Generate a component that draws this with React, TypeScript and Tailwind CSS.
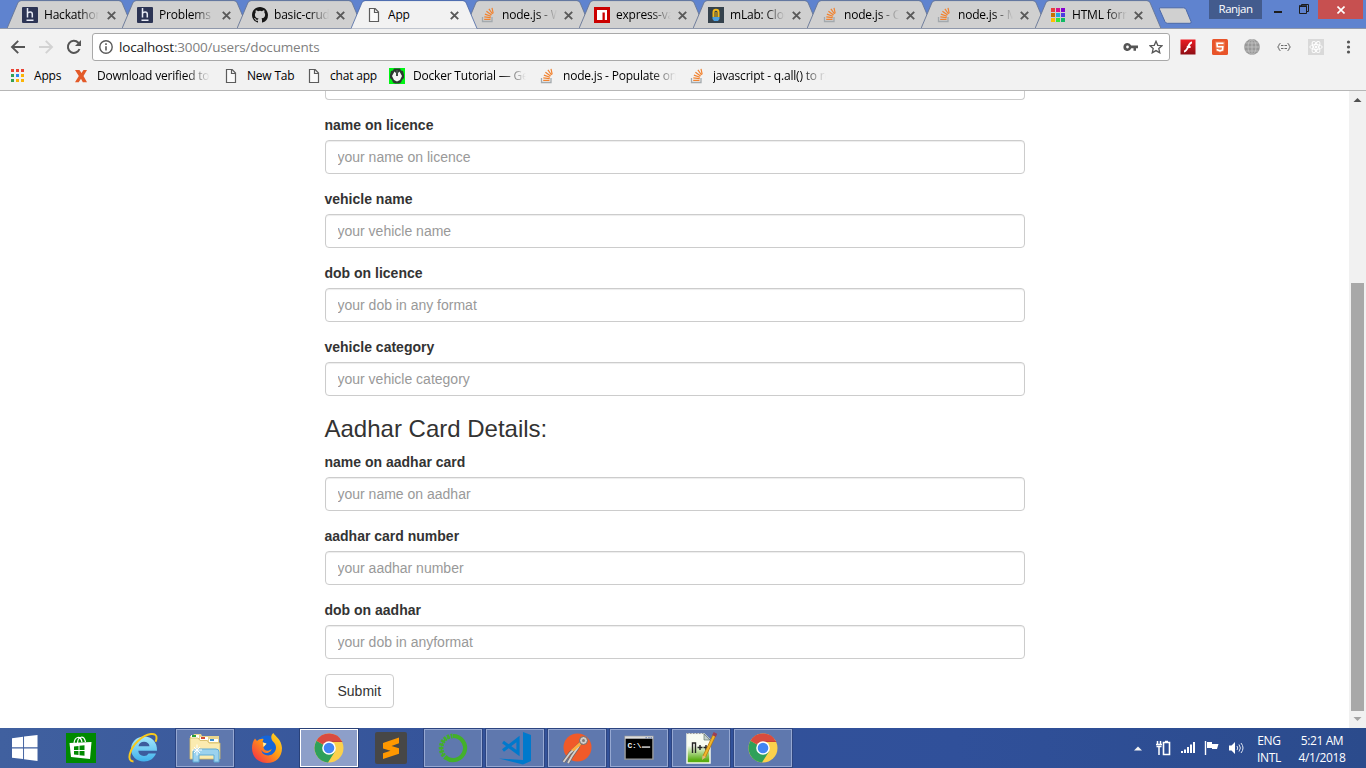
import React from "react";

const UI = "font-['Open_Sans','Noto_Sans',sans-serif]";

function HackerEarth() {
  return (
    <svg width="16" height="16" viewBox="0 0 16 16">
      <rect width="16" height="16" rx="1" fill="#2c3454" />
      <path d="M5.5 1v9.500M5.500 6.500C6.300 4.700 10.300 4.300 10.300 7.200v3.300M4.500 13.200h7" fill="none" stroke="#e8ebf5" strokeWidth="1.500" />
    </svg>
  );
}

function GitHub() {
  return (
    <svg width="16" height="16" viewBox="0 0 16 16">
      <path fill="#161616" d="M8 0C3.58 0 0 3.58 0 8c0 3.54 2.29 6.53 5.47 7.59.4.07.55-.17.55-.38 0-.19-.01-.82-.01-1.49-2.01.37-2.53-.49-2.69-.94-.09-.23-.48-.94-.82-1.13-.28-.15-.68-.52-.01-.53.63-.01 1.08.58 1.23.82.72 1.21 1.87.87 2.33.66.07-.52.28-.87.51-1.07-1.78-.2-3.64-.89-3.64-3.95 0-.87.31-1.59.82-2.15-.08-.2-.36-1.02.08-2.12 0 0 .67-.21 2.2.82a7.6 7.6 0 0 1 4 0c1.53-1.04 2.2-.82 2.2-.82.44 1.1.16 1.92.08 2.12.51.56.82 1.27.82 2.15 0 3.07-1.87 3.75-3.65 3.95.29.25.54.73.54 1.48 0 1.07-.01 1.93-.01 2.2 0 .21.15.46.55.38A8.01 8.01 0 0 0 16 8c0-4.42-3.58-8-8-8z" />
    </svg>
  );
}

function Doc() {
  return (
    <svg width="16" height="16" viewBox="0 0 16 16">
      <path d="M3.500 1.500h5.700l3.300 3.500v9.500h-9zM8.500 1.500v4h4" fill="#fafafa" stroke="#5c5c5c" strokeWidth="1.200" />
    </svg>
  );
}

function Stack() {
  return (
    <svg width="16" height="16" viewBox="0 0 16 16" fill="none">
      <path d="M2.500 10v4.500h9.500V10" stroke="#a3a9ad" strokeWidth="1.300" />
      <path d="M4.200 12.400h6.300M4.300 9.800l6.400.9M4.900 7.100l6.100 2.200M6.400 4.200l5.200 3.900M8.900 1.800l3.600 5.200M12 .8l1.200 5.500" stroke="#f1822f" strokeWidth="1.200" />
    </svg>
  );
}

function Npm() {
  return (
    <svg width="16" height="16" viewBox="0 0 16 16">
      <path fill="#cb0000" d="M0 0h16v16H0z" />
      <path fill="#fff" d="M3 3h10v10h-2.200V5.500H8.500V13H3z" />
    </svg>
  );
}

function MLab() {
  return (
    <svg width="16" height="16" viewBox="0 0 16 16">
      <path fill="#35424c" d="M0 0h16v16H0z" />
      <path d="M5.500 10V5.200Q5.500 2.800 8 2.800t2.500 2.400V10" fill="none" stroke="#f4b91b" strokeWidth="2" />
      <path d="M8 5v5" stroke="#f4b91b" />
      <path fill="#4c9fe0" d="M4.500 10h7v2L10 13.900H6L4.500 12z" />
    </svg>
  );
}

function ColorGrid() {
  const c = ["#ea3d3d", "#d6148c", "#8500cf", "#c77200", "#22a7e0", "#4e3ce0", "#ffbf00", "#37e537", "#10b964"];
  return (
    <svg width="16" height="16" viewBox="0 0 16 16">
      {c.map((f, i) => (
        <rect key={i} x={1 + (i % 3) * 5} y={1 + Math.floor(i / 3) * 5} width="4" height="4" fill={f} />
      ))}
    </svg>
  );
}

function Cross() {
  return (
    <svg width="9" height="9" viewBox="0 0 9 9">
      <path d="M.8.8l7.400 7.400M8.200.8L.8 8.200" stroke="#595959" strokeWidth="1.900" />
    </svg>
  );
}

type TabData = { title: string; icon: React.ReactNode; active?: boolean; wide?: boolean };

const tabs: TabData[] = [
  { title: "Hackathons", icon: <HackerEarth />, wide: true },
  { title: "Problems - J", icon: <HackerEarth />, wide: true },
  { title: "basic-crud-", icon: <GitHub /> },
  { title: "App", icon: <Doc />, active: true },
  { title: "node.js - W", icon: <Stack /> },
  { title: "express-vali", icon: <Npm /> },
  { title: "mLab: Clou", icon: <MLab /> },
  { title: "node.js - Ca", icon: <Stack /> },
  { title: "node.js - Mo", icon: <Stack /> },
  { title: "HTML forms", icon: <ColorGrid /> },
];

function Tab({ title, icon, active, wide }: TabData) {
  return (
    <div className={`relative h-[29px] shrink-0 ${wide ? "w-[115px]" : "w-[114px]"} ${active ? "z-10" : ""}`}>
      <svg className="absolute left-0 top-0" width="128" height="29" viewBox="0 0 128 29">
        <path d="M0 28.500L10.800 3Q11.600 1 14 1H112Q114.400 1 115.200 3L126 28.500" fill={active ? "#f2f2f2" : "#d0d0d0"} />
        <path d="M0 28.500L10.800 3Q11.600 .6 14 .6H112Q114.400 .6 115.200 3L126 28.500" fill="none" stroke={active ? "#4a66a4" : "#667596"} strokeOpacity={active ? 0.8 : 0.9} />
        {!active && <path d="M0 28.500H126" stroke="#a2a2a2" />}
      </svg>
      <div className="relative flex h-[29px] items-center pl-[15px] pt-px">
        {icon}
        <span className={`ml-[6px] w-[55px] overflow-hidden whitespace-nowrap text-[12px] leading-[18px] tracking-[-0.2px] text-black ${active ? "" : "[mask-image:linear-gradient(to_right,#000_64%,transparent)]"}`}>
          {title}
        </span>
        <span className={wide ? "ml-[8px]" : "ml-[7px]"}><Cross /></span>
      </div>
    </div>
  );
}

function TabStrip() {
  return (
    <div className="flex h-[28px] items-start bg-[#5f83cf]">
      <div className="flex h-[29px] w-[1149px] shrink-0 pl-[7px]">
        {tabs.map((t, i) => <Tab key={i} {...t} />)}
      </div>
      <svg className="ml-[9px] mt-[7px] shrink-0" width="35" height="18" viewBox="0 0 35 18">
        <path d="M2.500 .8H25.500Q27.300 .8 28 2.400L33 14.500Q33.600 16.300 32 16.300H9.500Q7.800 16.300 7 14.700L1.600 2.500Q1 .8 2.500 .8z" fill="#d0d0d0" stroke="#4c69a8" />
      </svg>
      <div className="ml-[16px] h-[19px] w-[53px] shrink-0 bg-[#435b8d] text-center text-[11.500px] leading-[18px] tracking-[-0.500px] text-white">Ranjan</div>
      <svg className="shrink-0" width="56" height="19" viewBox="0 0 56 19" fill="none" stroke="#1d1d1d">
        <path d="M12 12h8" strokeWidth="2" />
        <path d="M37.500 6.500h7v7h-7zM39.500 6V4.500h7v7H45" />
        <path d="M37 6h8" strokeWidth="1.500" />
      </svg>
      <div className="flex h-[19px] w-[45px] shrink-0 items-center justify-center bg-[#c75050]">
        <svg width="8" height="8" viewBox="0 0 8 8"><path d="M.5.5l7 7M7.500.5l-7 7" stroke="#fff" strokeWidth="1.600" /></svg>
      </div>
    </div>
  );
}

function Toolbar() {
  return (
    <div className="relative flex h-[33px] items-end border-t border-[#8f98ab] bg-[#f2f2f2]">
      <div className="flex h-[28px] w-[92px] shrink-0 items-center pl-[10px]">
        <svg width="16" height="16" viewBox="0 0 16 16" fill="none" stroke="#555" strokeWidth="1.900"><path d="M15 8H2.500M8.200 1.800L2 8l6.200 6.200" /></svg>
        <svg className="ml-[12px]" width="16" height="16" viewBox="0 0 16 16" fill="none" stroke="#d2d2d2" strokeWidth="1.900"><path d="M1 8h12.500M7.800 1.800L14 8l-6.200 6.200" /></svg>
        <svg className="ml-[12px]" width="16" height="16" viewBox="0 0 16 16" fill="none"><path d="M13.500 10A6 6 0 1 1 12.300 3.800L14 5.500" stroke="#555" strokeWidth="2" /><path d="M15 1v6H9z" fill="#555" /></svg>
      </div>
      <div className="flex h-[28px] w-[1078px] shrink-0 items-center rounded-[3px] border border-[#a9a9a9] bg-white pl-[6px] pr-[6px]">
        <svg width="14" height="14" viewBox="0 0 14 14" fill="none" stroke="#5a5a5a"><circle cx="7" cy="7" r="6.200" strokeWidth="1.400" /><path d="M7 6.200v4.300M7 3.300v1.600" strokeWidth="1.600" /></svg>
        <span className="ml-[6px] text-[13.500px] leading-[20px] tracking-[-0.18px] text-[#808080]"><span className="text-[#222]">localhost</span>:3000/users/documents</span>
        <div className="ml-auto flex items-center gap-[11px]">
          <svg width="15" height="10" viewBox="0 0 15 10"><path fillRule="evenodd" fill="#555" d="M4.500 1a4 4 0 1 0 3.700 5.300h2.300v2.400h2.500V6.300H15V3.500H8.200A4 4 0 0 0 4.500 1zm0 2.600a1.400 1.400 0 1 1 0 2.800 1.400 1.400 0 0 1 0-2.800z" /></svg>
          <svg width="14" height="14" viewBox="0 0 14 14"><path d="M7 1.300l1.750 4 4.300.4-3.250 2.900.95 4.200L7 10.600l-3.750 2.200.95-4.200L.95 5.700l4.300-.4z" fill="none" stroke="#555" strokeWidth="1.300" /></svg>
        </div>
      </div>
      <div className="flex h-[28px] items-center gap-[16px] pl-[10px]">
        <svg width="16" height="16" viewBox="0 0 16 16"><defs><linearGradient id="flash" x1="0" y1="0" x2="0" y2="1"><stop stopColor="#ed1c24" /><stop offset="1" stopColor="#8d0e14" /></linearGradient></defs><path fill="url(#flash)" d="M.5.5h15v15H.5z" /><path d="M12 3.500C8 3.500 8.200 12.300 4 12.500M6.800 8h3.800" fill="none" stroke="#fff" strokeWidth="1.900" /></svg>
        <svg width="16" height="16" viewBox="0 0 16 16"><rect width="16" height="16" rx="1.500" fill="#e8542a" /><path d="M3 2.500h10l-1 9.700-4 1.300-4-1.300z" fill="#ef7a50" /><path d="M11.500 4.200H5l.3 3.600h5.500l-.3 3.200-2.500.8-2.500-.8-.1-1" fill="none" stroke="#fff" strokeWidth="1.600" /></svg>
        <svg width="16" height="16" viewBox="0 0 16 16" fill="none" stroke="#c4c4c4" strokeWidth=".8"><circle cx="8" cy="8" r="7.900" fill="#989898" stroke="none" /><path d="M0 8h16M8 0v16M1.500 4h13M1.500 12h13" /><ellipse cx="8" cy="8" rx="4" ry="7.600" /></svg>
        <svg width="16" height="16" viewBox="0 0 16 16" fill="none" stroke="#6c6c6c"><path d="M4.500 4.500q-1.500 0-1.500 1.500T1.500 8q1.500.4 1.500 2t1.500 1.500M11.500 4.500q1.500 0 1.500 1.500t1.500 2q-1.500.4-1.500 2t-1.500 1.500" /><path d="M5 6.500h2.500M8.500 6.500H11M5 9.500h2.500M8.500 9.500H11" /></svg>
        <svg width="16" height="16" viewBox="0 0 16 16" fill="none" stroke="#fff" strokeWidth=".9"><path fill="#d9d9d9" stroke="none" d="M0 0h16v16H0z" /><circle cx="8" cy="8" r="1" fill="#fff" /><ellipse cx="8" cy="8" rx="6.200" ry="2.500" /><ellipse cx="8" cy="8" rx="6.200" ry="2.500" transform="rotate(60 8 8)" /><ellipse cx="8" cy="8" rx="6.200" ry="2.500" transform="rotate(120 8 8)" /></svg>
        <svg width="16" height="16" viewBox="0 0 16 16" fill="#555"><circle cx="8.500" cy="3" r="1.600" /><circle cx="8.500" cy="8" r="1.600" /><circle cx="8.500" cy="13" r="1.600" /></svg>
      </div>
    </div>
  );
}

function AppsIcon() {
  const c = ["#ea4335", "#ea4335", "#ea4335", "#34a053", "#2b87f0", "#fbb405", "#34a053", "#fbb405", "#fbb405"];
  return (
    <svg width="13" height="13" viewBox="0 0 13 13">
      {c.map((f, i) => <rect key={i} x={(i % 3) * 5} y={Math.floor(i / 3) * 5} width="3" height="3" fill={f} />)}
    </svg>
  );
}

function Bookmark({ icon, width, children, fade }: { icon: React.ReactNode; width: string; children: React.ReactNode; fade?: boolean }) {
  return (
    <div className={`flex shrink-0 items-center ${width}`}>
      {icon}
      <span className={`ml-[8px] flex-1 overflow-hidden whitespace-nowrap text-[12px] leading-[18px] tracking-[-0.2px] text-black ${fade ? "mr-[13px] [mask-image:linear-gradient(to_right,#000_78%,transparent)]" : ""}`}>{children}</span>
    </div>
  );
}

function Bookmarks() {
  return (
    <div className="flex h-[30px] items-center border-b border-[#b6b6b6] bg-[#f2f2f2] pl-[11px]">
      <Bookmark icon={<span className="mr-[2px]"><AppsIcon /></span>} width="w-[62px]">Apps</Bookmark>
      <Bookmark fade width="w-[150px]" icon={<svg width="16" height="16" viewBox="0 0 16 16"><path fill="#e35a29" d="M2 2h4.500l2 3L10.500 2h3.500l-3.500 6 3.500 6.200H9.800L8 10.800l-2.300 3.400H2l3.800-6.200z" /></svg>}>Download verified torrents</Bookmark>
      <Bookmark width="w-[83px]" icon={<Doc />}>New Tab</Bookmark>
      <Bookmark width="w-[83px]" icon={<Doc />}>chat app</Bookmark>
      <Bookmark fade width="w-[150px]" icon={<svg width="16" height="16" viewBox="0 0 16 16"><path fill="#00f414" d="M0 0h16v16H0z" /><path fill="#2c3830" d="M5 .5h6l1 2 2 .5 1 4v3l-2 2-1 2.500-2 1H6l-2-1-1-2.500-2-2V7l1-4 2-.5z" /><path d="M5.500 3.500L7 5v3h2V5l1.500-1.500L13 8l-2 4-3 1.500L5 12 3 8z" fill="#f5f5f5" /><path d="M8 2v6" stroke="#59615c" strokeWidth="1" /></svg>}>Docker Tutorial — Getting</Bookmark>
      <Bookmark fade width="w-[150px]" icon={<Stack />}>node.js - Populate on s</Bookmark>
      <Bookmark fade width="w-[150px]" icon={<Stack />}>javascript - q.all() to re</Bookmark>
    </div>
  );
}

function Field({ label, placeholder }: { label: string; placeholder: string }) {
  return (
    <div className="mb-[15px]">
      <label className="mb-[5px] block text-[14px] font-bold leading-[20px] text-[#333]">{label}</label>
      <input className="block h-[34px] w-full rounded-[4px] border border-[#ccc] bg-white px-3 py-1.5 text-[14px] leading-[20px] shadow-[inset_0_1px_1px_rgba(0,0,0,0.075)] placeholder:text-[#999] placeholder:opacity-100" placeholder={placeholder} />
    </div>
  );
}

function Page() {
  return (
    <div className="flex h-[637px] bg-white">
      <main className="flex-1 overflow-hidden font-['Liberation_Sans',Arial,sans-serif]">
        <form className="mx-auto w-[700px]" onSubmit={(e) => e.preventDefault()}>
          <div className="mb-[15px] h-[9px] rounded-b-[4px] border border-t-0 border-[#ccc]" />
          <Field label="name on licence" placeholder="your name on licence" />
          <Field label="vehicle name" placeholder="your vehicle name" />
          <Field label="dob on licence" placeholder="your dob in any format" />
          <Field label="vehicle category" placeholder="your vehicle category" />
          <h3 className="mb-[10px] mt-[20px] text-[24px] font-normal leading-[26.4px] text-[#333]">Aadhar Card Details:</h3>
          <Field label="name on aadhar card" placeholder="your name on aadhar" />
          <Field label="aadhar card number" placeholder="your aadhar number" />
          <Field label="dob on aadhar" placeholder="your dob in anyformat" />
          <button className="block h-[34px] rounded-[4px] border border-[#ccc] bg-white px-3 text-[14px] leading-[20px] text-[#333]">Submit</button>
        </form>
      </main>
      <div className="flex w-[17px] shrink-0 flex-col items-center bg-[#f1f1f1]">
        <svg width="17" height="17" viewBox="0 0 17 17"><path d="M4.500 11L8.500 7l4 4z" fill="#505050" /></svg>
        <div className="mt-[175px] h-[428px] w-[13px] bg-[#a8a8a8]" />
        <svg width="17" height="17" viewBox="0 0 17 17"><path d="M4.500 6l4 4 4-4z" fill="#a3a3a3" /></svg>
      </div>
    </div>
  );
}

function Chrome() {
  return (
    <svg width="30" height="30" viewBox="0 0 30 30">
      <circle cx="15" cy="15" r="14.500" fill="#fbd14c" />
      <path d="M15 15L2.500 7.700A14.500 14.500 0 0 0 14 29.500L21.300 18z" fill="#2fa05a" />
      <path d="M15 15L2.500 7.700A14.500 14.500 0 0 1 28.300 9H15z" fill="#d94b3f" />
      <path d="M15 8.500h13.300" stroke="#b23b32" strokeWidth=".5" />
      <circle cx="15" cy="15" r="6.800" fill="#fff" />
      <circle cx="15" cy="15" r="5.300" fill="#4285f4" />
    </svg>
  );
}

function Store() {
  return (
    <svg width="30" height="30" viewBox="0 0 30 30">
      <path fill="#008a00" d="M0 0h30v30H0z" />
      <path d="M8 10.500C8.500 3.500 14.500 2 16 9M11.500 10C12 3 18 2 19.500 9" fill="none" stroke="#fff" strokeWidth="1.200" />
      <path d="M3.500 10L25.500 9 24 26 5 24z" fill="#fff" />
      <path d="M8 13.500l4.500-.5v4H8zM13.500 12.800l5-.6v4.800h-5zM8 18h4.500v4L8 21.500zM13.500 18h5v4.800l-5-.6z" fill="#008a00" />
    </svg>
  );
}

function IE() {
  return (
    <svg width="32" height="32" viewBox="0 0 32 32" fill="none">
      <defs><linearGradient id="ie" x1="0" y1="0" x2="0" y2="1"><stop stopColor="#a6e8fc" /><stop offset="1" stopColor="#3fb2ec" /></linearGradient></defs>
      <path fill="url(#ie)" fillRule="evenodd" d="M17 4.500C10 4.500 4 9.800 4 17s5.500 12.500 13 12.500c5.500 0 10-3 12-8h-7.500c-1 1.700-2.500 2.500-4.500 2.500-3.500 0-5.500-2-5.700-5.200H30C30.500 10.500 25 4.500 17 4.500zm-5.500 9.800C12 11.300 14 9.700 17 9.700s5.200 1.600 5.500 4.600z" />
      <path d="M6.500 29.500C-1 29.500 2.500 17 11 9 19.500.8 30.500-.5 29.500 6.500c-.1 1.200-.5 2.300-1 3.300" stroke="#f8c91c" strokeWidth="2" />
    </svg>
  );
}

function Explorer() {
  return (
    <svg width="34" height="32" viewBox="0 0 34 32">
      <path d="M2 4h3l1-2h7l1 2h17v23H2z" fill="#e8d58e" />
      <path d="M3 3h8v3H3z" fill="#fff" /><path d="M4 3h4v2H4z" fill="#2aa037" /><path d="M12 5h8v3h-8z" fill="#fff" /><path d="M13 5h4v2h-4z" fill="#d24a34" /><path d="M21 7h9v3h-9z" fill="#fff" /><path d="M22 7h4v2h-4z" fill="#3b8ed0" />
      <path d="M2 6h8l2 2.500h7l2 2.500h11v16H2z" fill="#fbebb0" stroke="#d6bd68" strokeWidth=".8" />
      <path d="M5 30V20q0-3 3-3h20q3 0 3 3v10h-5v-7H11v7z" fill="#9bd2ee" stroke="#5fabd6" />
      <path d="M9 12.500v11M4 18h10M6 15l6 6M12 15l-6 6" stroke="#fff" strokeWidth="1" />
    </svg>
  );
}

function Firefox() {
  return (
    <svg width="32" height="32" viewBox="0 0 32 32">
      <defs><linearGradient id="ff" x1="1" y1="0" x2="0" y2="1"><stop stopColor="#ffe226" /><stop offset=".45" stopColor="#ff9a14" /><stop offset="1" stopColor="#f31f50" /></linearGradient></defs>
      <circle cx="16" cy="15" r="11.500" fill="#1665d8" />
      <path d="M4 6.500L6 9c2-2 5-2.500 6.500-2l-1 3 4 2-3 3c0 4 5 5 8 2 0 4-8 6-10 1 0 5 7 7 11 4 5-4 4-9 1-12-3-3-3-7 0-9 1 3 8 6 8.500 15C31 25 25 31 16 31 7 31 1 25 1 16c0-4 1-7 3-9.500z" fill="url(#ff)" />
      <path d="M12.500 15l3-3.500-3.500-1z" fill="#fff2a8" />
    </svg>
  );
}

function Sublime() {
  return (
    <svg width="32" height="32" viewBox="0 0 32 32">
      <rect width="32" height="32" rx="2" fill="#474747" />
      <path d="M8 11L24 5.500v5.700L16.500 14l7.500 2.300v5.400L8 27v-5.700l7.500-2.600L8 16.500z" fill="#ff9800" />
    </svg>
  );
}

function Anaconda() {
  return (
    <svg width="32" height="32" viewBox="0 0 32 32" fill="none" stroke="#43b02a">
      <path d="M16 4A12 12 0 1 1 9 25.700" strokeWidth="4.200" />
      <path d="M9.500 26A12 12 0 0 1 15.500 4" strokeWidth="4.800" strokeDasharray="2.200 1.300" />
      <path d="M7 24A12 12 0 0 1 13 5" strokeWidth="1.400" strokeDasharray="4 1" />
    </svg>
  );
}

function VSCode() {
  return (
    <svg width="34" height="34" viewBox="0 0 34 34">
      <path d="M25 1l8 3v26l-8 3.500L1 27.500l24 1.500z" fill="#0079cc" />
      <path d="M5 11L20 22V8L5 19.500" fill="none" stroke="#0079cc" strokeWidth="3.200" />
    </svg>
  );
}

function Postman() {
  return (
    <svg width="32" height="32" viewBox="0 0 32 32">
      <circle cx="16.500" cy="15.500" r="14" fill="#f15a29" />
      <path d="M22 9L9 21 2.500 30M18 14l-7 10-4 7" stroke="#6f6864" strokeWidth="3.200" fill="none" />
      <path d="M22 9L9 21 2.500 30M18 14l-7 10-4 7" stroke="#d5d1ce" strokeWidth="1.800" fill="none" />
      <path d="M19 10l-9 8 3 1 7-6z" fill="#ffaf3d" />
      <circle cx="22.500" cy="8.500" r="4" fill="#d0ccc8" stroke="#726963" /><circle cx="22.500" cy="8.500" r="1.500" fill="#817a76" />
    </svg>
  );
}

function Terminal() {
  return (
    <svg width="30" height="26" viewBox="0 0 32 28">
      <path d="M1 1.500h30V26H1z" fill="#000" stroke="#9c9c9c" strokeWidth="1.500" />
      <path d="M1 1.500h30V4H1z" fill="#dedede" /><path d="M23 3h1.500M26 3h1.500M28.500 3H30" stroke="#4866a2" />
      <text x="3.500" y="13.500" fill="#f4f4f4" fontSize="8.500" fontWeight="bold" fontFamily="Liberation Mono">C:\</text>
      <path d="M19 13h9" stroke="#f4f4f4" strokeWidth="1.400" />
    </svg>
  );
}

function Notepad() {
  return (
    <svg width="32" height="34" viewBox="0 0 32 34">
      <defs><linearGradient id="np" x1="0" y1="0" x2="0" y2="1"><stop offset=".4" stopColor="#f8fcf2" /><stop offset=".9" stopColor="#59ad12" /></linearGradient></defs>
      <path d="M2 3h17l6 6v23H2z" fill="url(#np)" stroke="#f3f7ec" strokeWidth="1.500" />
      <path d="M2 2.500h17" stroke="#999" strokeDasharray="1.500 1.500" /><path d="M19 3v6h6z" fill="#c4d0cd" stroke="#4f6155" strokeWidth=".6" />
      <path d="M7.500 22V12h3v10M12.500 16.500h5M15 14v5M18.500 16.500h5M21 14v5" fill="none" stroke="#252525" strokeWidth="1.400" />
      <path d="M29.500 4L19 26" stroke="#b67813" strokeWidth="3.500" /><path d="M29.500 4L19 26" stroke="#f0b72c" strokeWidth="2" /><path d="M30.500 2L29 5" stroke="#9d3f52" strokeWidth="4" /><path d="M17.500 24.500L17 29l4-3z" fill="#e6ba77" />
    </svg>
  );
}

function Task({ children, state }: { children: React.ReactNode; state?: "open" | "focus" }) {
  const box =
    state === "focus"
      ? "border-white bg-[#8d9fc9] outline outline-1 outline-[#294178]"
      : state === "open"
        ? "border-[#96a8d2] bg-[#5f78ae] outline outline-1 outline-[#2d4581]"
        : "border-transparent";
  return (
    <div className="flex h-[40px] w-[62px] shrink-0 items-center justify-center">
      <div className={`flex h-[38px] w-[58px] items-center justify-center border ${box}`}>{children}</div>
    </div>
  );
}

function Taskbar() {
  return (
    <div className="flex h-[40px] items-center bg-[linear-gradient(90deg,#40609f,#34539a_35%,#30509a_70%,#2b4b8c)] text-white">
      <div className="flex h-[40px] w-[50px] shrink-0 items-center pl-[12px]">
        <svg width="26" height="26" viewBox="0 0 27 27"><path fill="#fff" d="M0 3.500l11.500-1.700v11H0zM12.500 1.600L26.500 0v12.800h-14zM0 14h11.500v11L0 23.500zM12.500 14h14v13l-14-1.900z" /></svg>
      </div>
      <Task><Store /></Task>
      <Task><IE /></Task>
      <Task state="open"><Explorer /></Task>
      <Task><Firefox /></Task>
      <Task state="focus"><Chrome /></Task>
      <Task><Sublime /></Task>
      <Task state="open"><Anaconda /></Task>
      <Task state="open"><VSCode /></Task>
      <Task state="open"><Postman /></Task>
      <Task state="open"><Terminal /></Task>
      <Task state="open"><Notepad /></Task>
      <Task state="open"><Chrome /></Task>
      <div className="ml-auto flex items-center">
        <svg width="8" height="5" viewBox="0 0 8 5"><path d="M0 4.500L4 .5l4 4z" fill="#f4f4f4" /></svg>
        <svg className="ml-[14px]" width="16" height="18" viewBox="0 0 16 18" fill="none" stroke="#fff"><path d="M7.500 3.500h6v12h-6zM9 2.500h3" strokeWidth="1.600" /><path d="M1.500 2v3M4.500 2v3M0 5.500h6M.5 7.500h5M3 8v8" strokeWidth="1.500" /></svg>
        <svg className="ml-[8px]" width="16" height="16" viewBox="0 0 16 16" fill="#fff"><path d="M1 11h2v2H1zM4 9.500h2V13H4zM7 7h2v6H7zM10 4.500h2V13h-2zM13 2h2v11h-2z" /></svg>
        <svg className="ml-[8px]" width="16" height="16" viewBox="0 0 16 16"><path d="M1.500 1v14" stroke="#fff" strokeWidth="1.400" /><path d="M3 2h5v2h6.500L13 9H8V8H3z" fill="#fff" /></svg>
        <svg className="ml-[8px]" width="16" height="16" viewBox="0 0 16 16"><path fill="#fff" d="M1 5.500h2.500L7 2v12l-3.500-3.500H1z" /><path d="M9 6q1.500 2 0 4M11 4.500q2.800 3.500 0 7M13 3q4 5 0 10" fill="none" stroke="#e1e7f4" /></svg>
        <div className="ml-[9px] w-[32px] pt-px text-center text-[12px] leading-[17px] tracking-[-0.3px]">ENG<br />INTL</div>
        <div className="ml-[10px] mr-[17px] w-[54px] whitespace-nowrap pt-px text-center text-[12px] leading-[17px] tracking-[-0.4px]">5:21 AM<br />4/1/2018</div>
      </div>
    </div>
  );
}

export default function App() {
  return (
    <div className={`h-[768px] w-[1366px] overflow-hidden bg-white ${UI}`}>
      <TabStrip />
      <Toolbar />
      <Bookmarks />
      <Page />
      <Taskbar />
    </div>
  );
}
